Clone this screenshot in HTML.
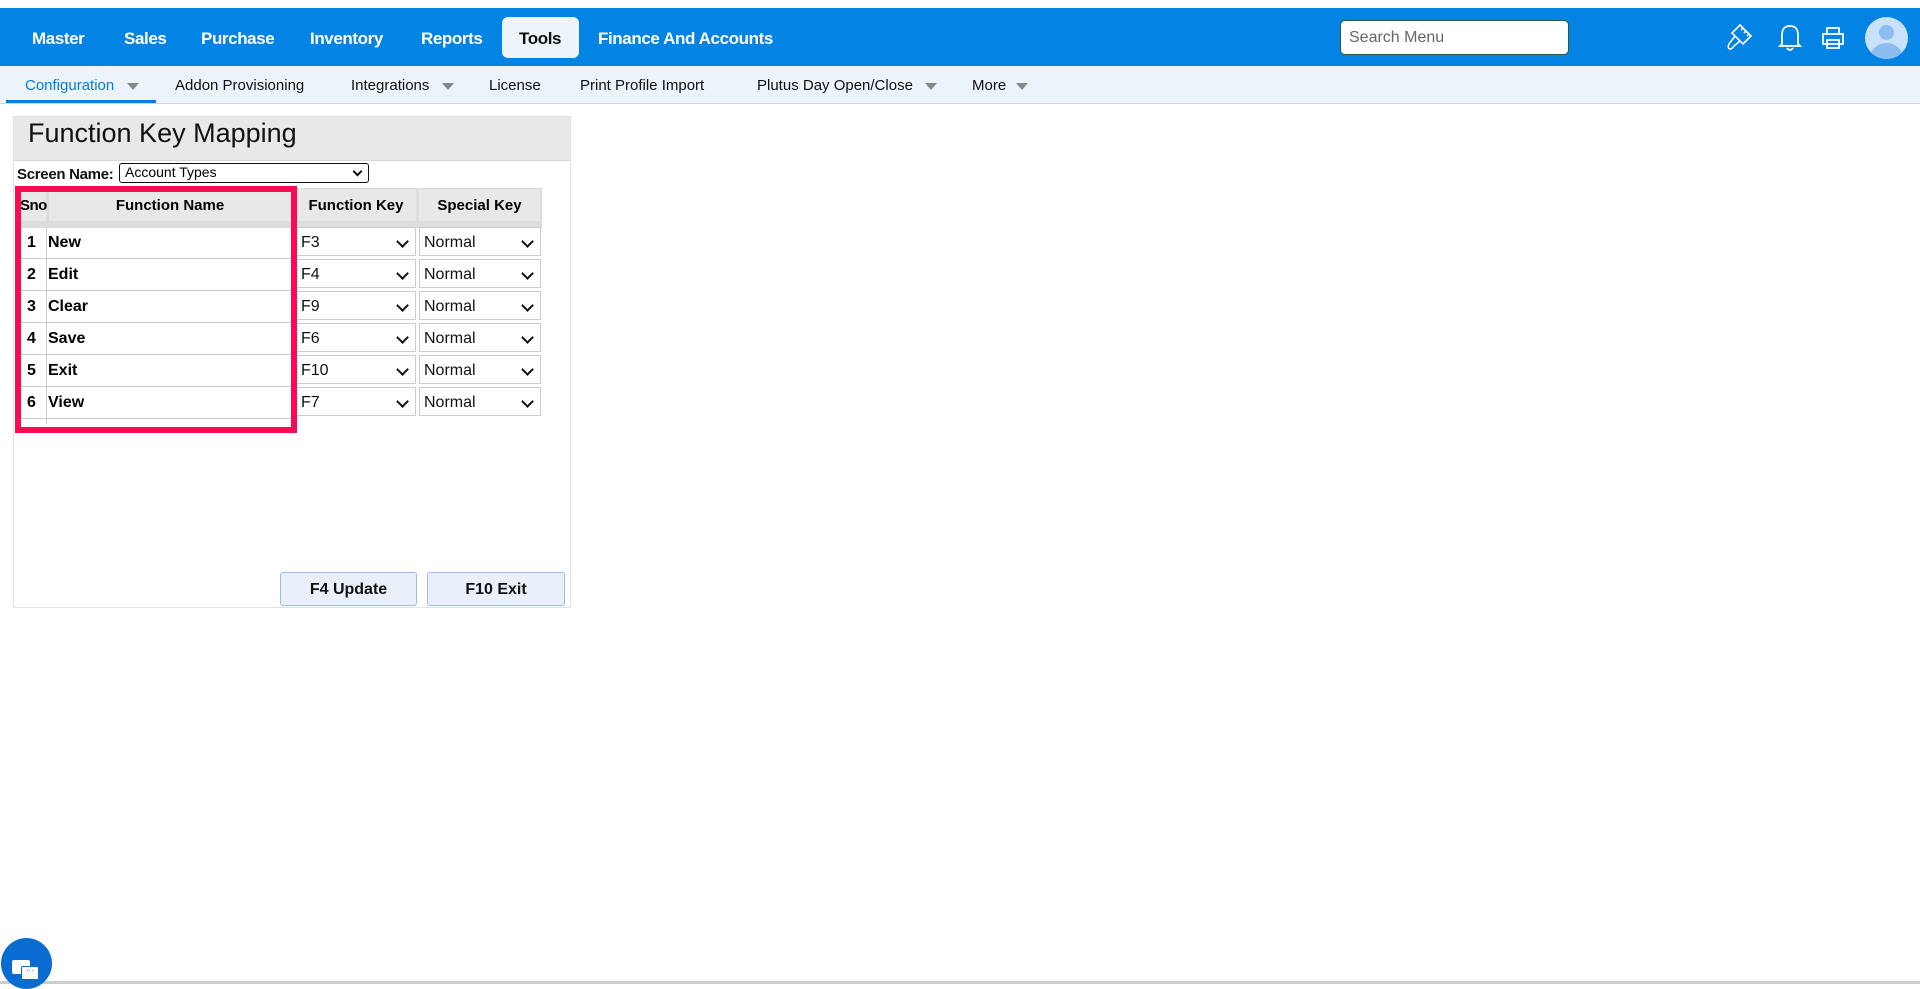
<!DOCTYPE html>
<html><head><meta charset="utf-8"><style>
*{box-sizing:border-box;margin:0;padding:0}
body{width:1920px;height:984px;background:#fff;font-family:"Liberation Sans",sans-serif;position:relative;overflow:hidden}
.a{position:absolute;white-space:nowrap}
.nav{left:0;top:8px;width:1920px;height:58px;background:#0383e3}
.ni{color:#fff;font-weight:bold;font-size:17px;top:29px;letter-spacing:-0.4px}
.sub{left:0;top:66px;width:1920px;height:38px;background:#ebf3fb;border-bottom:1px solid #c9d7e3}
.si{color:#111;font-size:15px;top:77px}
.arr{width:0;height:0;border-left:6px solid transparent;border-right:6px solid transparent;border-top:7px solid #888;top:83px}
.sel{position:absolute;border:1px solid #ccc;background:#fff;font-size:16px;color:#111;padding:6px 4px 0}
.sel:after{content:"";position:absolute;right:8px;top:9px;width:7px;height:7px;border-right:2px solid #111;border-bottom:2px solid #111;transform:rotate(45deg)}
.btn{position:absolute;top:572px;height:34px;background:#e9f0fa;border:1px solid #9cbde0;border-radius:3px;font-weight:bold;font-size:16px;text-align:center;line-height:34px;color:#111}
.t{position:absolute;font-size:16px;font-weight:bold;line-height:20px}
</style></head><body>
<div class="a nav"></div>
<div class="a ni" style="left:32px">Master</div>
<div class="a ni" style="left:124px">Sales</div>
<div class="a ni" style="left:201px">Purchase</div>
<div class="a ni" style="left:310px">Inventory</div>
<div class="a ni" style="left:421px">Reports</div>
<div class="a" style="left:502px;top:17px;width:77px;height:41px;background:#eef4fb;border-radius:6px"></div>
<div class="a ni" style="left:519px;color:#111">Tools</div>
<div class="a ni" style="left:598px">Finance And Accounts</div>
<div class="a" style="left:1340px;top:20px;width:229px;height:35px;background:#fff;border:1px solid #2d5a3d;border-radius:5px;font-size:16px;color:#666;padding:8px 8px">Search Menu</div>
<svg class="a" style="left:1724px;top:22px" width="30" height="30" viewBox="0 0 30 30" fill="none" stroke="#fff" stroke-width="1.6"><path d="M16 3 L27 14 L19 22 L8 11 Z M11 14 L5 22 Q3 26 6 27 Q8 27 10 24 L16 19 M19 6 L17 8 M22 9 L20 11 M25 12 L23 14"/></svg>
<svg class="a" style="left:1777px;top:22px" width="26" height="30" viewBox="0 0 26 30" fill="none" stroke="#fff" stroke-width="1.8"><path d="M5 22 L5 13 Q5 4 13 4 Q21 4 21 13 L21 22 L23 24 L3 24 Z M10 26 Q13 30 16 26"/></svg>
<svg class="a" style="left:1820px;top:25px" width="26" height="26" viewBox="0 0 26 26" fill="none" stroke="#fff" stroke-width="1.8"><path d="M7 9 V3 H19 V9 M3 9 H23 V19 H3 Z M7 15 H19 V23 H7 Z"/></svg>
<div class="a" style="left:1865px;top:17px;width:43px;height:42px;border-radius:50%;background:#c9e2fb;overflow:hidden"><div class="a" style="left:14px;top:8px;width:15px;height:15px;border-radius:50%;background:#8dbdf0"></div><div class="a" style="left:5px;top:26px;width:33px;height:30px;border-radius:50%;background:#8dbdf0"></div></div>

<div class="a sub"></div>
<div class="a si" style="left:25px;color:#0a7ddc">Configuration</div><div class="a arr" style="left:127px"></div>
<div class="a" style="left:6px;top:100px;width:150px;height:3px;background:#0a7ddc"></div>
<div class="a si" style="left:175px">Addon Provisioning</div>
<div class="a si" style="left:351px">Integrations</div><div class="a arr" style="left:442px"></div>
<div class="a si" style="left:489px">License</div>
<div class="a si" style="left:580px">Print Profile Import</div>
<div class="a si" style="left:757px">Plutus Day Open/Close</div><div class="a arr" style="left:925px"></div>
<div class="a si" style="left:972px">More</div><div class="a arr" style="left:1016px"></div>

<div class="a" style="left:13px;top:116px;width:558px;height:492px;border:1px solid #dde3e8"></div>
<div class="a" style="left:14px;top:117px;width:556px;height:44px;background:#e8e8e8;border-bottom:1px solid #d6d6d6"></div>
<div class="a" style="left:28px;top:118px;font-size:27px;color:#111">Function Key Mapping</div>
<div class="a" style="left:17px;top:166px;font-size:15px;font-weight:bold;color:#111;letter-spacing:-0.3px">Screen Name:</div>
<div class="a" style="left:119px;top:163px;width:250px;height:20px;border:1.5px solid #111;border-radius:3px;font-size:14px;padding:0 5px;line-height:17px">Account Types<span style="position:absolute;right:7px;top:4px;width:7px;height:7px;border-right:2px solid #111;border-bottom:2px solid #111;transform:rotate(45deg)"></span></div>

<div class="a" style="left:18px;top:188px;width:524px;height:40px;background:#ddd"></div>
<div class="a" style="left:20px;top:189px;width:26px;height:32px;background:#e8e8e8;font-weight:bold;font-size:15px;line-height:34px;text-align:center;letter-spacing:-0.5px">Sno</div>
<div class="a" style="left:49px;top:189px;width:242px;height:32px;background:#e8e8e8;font-weight:bold;font-size:15px;line-height:34px;text-align:center">Function Name</div>
<div class="a" style="left:296px;top:189px;width:120px;height:32px;background:#e8e8e8;font-weight:bold;font-size:15px;line-height:34px;text-align:center">Function Key</div>
<div class="a" style="left:419px;top:189px;width:121px;height:32px;background:#e8e8e8;font-weight:bold;font-size:15px;line-height:34px;text-align:center">Special Key</div>
<div class="a" style="left:18px;top:228px;width:275px;height:204px;background:#fff"></div>

<div class="a" style="left:46px;top:228px;width:1px;height:196px;background:#ccc"></div>
<div class="a" style="left:18px;top:258px;width:275px;height:1px;background:#ccc"></div>
<div class="a" style="left:18px;top:290px;width:275px;height:1px;background:#ccc"></div>
<div class="a" style="left:18px;top:322px;width:275px;height:1px;background:#ccc"></div>
<div class="a" style="left:18px;top:354px;width:275px;height:1px;background:#ccc"></div>
<div class="a" style="left:18px;top:386px;width:275px;height:1px;background:#ccc"></div>
<div class="a" style="left:18px;top:418px;width:275px;height:1px;background:#ccc"></div>

<div class="t" style="left:27px;top:233px">1</div><div class="t" style="left:48px;top:233px">New</div>
<div class="t" style="left:27px;top:265px">2</div><div class="t" style="left:48px;top:265px">Edit</div>
<div class="t" style="left:27px;top:297px">3</div><div class="t" style="left:48px;top:297px">Clear</div>
<div class="t" style="left:27px;top:329px">4</div><div class="t" style="left:48px;top:329px">Save</div>
<div class="t" style="left:27px;top:361px">5</div><div class="t" style="left:48px;top:361px">Exit</div>
<div class="t" style="left:27px;top:393px">6</div><div class="t" style="left:48px;top:393px">View</div>

<div class="sel" style="left:296px;top:227px;width:120px;height:29px">F3</div><div class="sel" style="left:419px;top:227px;width:122px;height:29px">Normal</div>
<div class="sel" style="left:296px;top:259px;width:120px;height:29px">F4</div><div class="sel" style="left:419px;top:259px;width:122px;height:29px">Normal</div>
<div class="sel" style="left:296px;top:291px;width:120px;height:29px">F9</div><div class="sel" style="left:419px;top:291px;width:122px;height:29px">Normal</div>
<div class="sel" style="left:296px;top:323px;width:120px;height:29px">F6</div><div class="sel" style="left:419px;top:323px;width:122px;height:29px">Normal</div>
<div class="sel" style="left:296px;top:355px;width:120px;height:29px">F10</div><div class="sel" style="left:419px;top:355px;width:122px;height:29px">Normal</div>
<div class="sel" style="left:296px;top:387px;width:120px;height:29px">F7</div><div class="sel" style="left:419px;top:387px;width:122px;height:29px">Normal</div>

<div class="a" style="left:15px;top:186px;width:282px;height:247px;border:6px solid #fe0a52"></div>

<div class="btn" style="left:280px;width:137px">F4 Update</div>
<div class="btn" style="left:427px;width:138px">F10 Exit</div>

<div class="a" style="left:0;top:981px;width:1920px;height:3px;background:#ccc"></div>
<div class="a" style="left:1px;top:938px;width:51px;height:51px;border-radius:50%;background:#0a6bd0"></div>
<div class="a" style="left:12px;top:960px;width:18px;height:14px;background:#fff;border-radius:2px"></div>
<div class="a" style="left:21px;top:966px;width:18px;height:14px;background:#fff;border:1px solid #0a6bd0;border-radius:2px;font-size:8px;color:#0a6bd0;text-align:center;line-height:8px">···</div>
</body></html>
